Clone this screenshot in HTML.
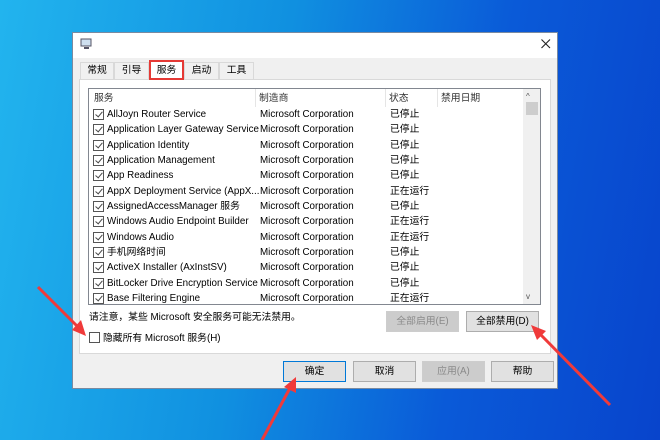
<!DOCTYPE html><html><head><meta charset="utf-8"><style>
*{margin:0;padding:0;box-sizing:border-box}
body{width:660px;height:440px;overflow:hidden;position:relative;font-family:"Liberation Sans","Noto Sans CJK SC",sans-serif;font-size:9.8px;color:#000;
background:linear-gradient(100deg,#22b4ee 0%,#1090e0 40%,#0a5ad8 70%,#0844cc 100%)}
.win{position:absolute;left:72px;top:32px;width:486px;height:357px;background:#f0f0f0;border:1px solid #7a8aa0}
.title{position:absolute;left:0;top:0;width:100%;height:25px;background:#fff}
.abs{position:absolute;white-space:nowrap}
.tab{position:absolute;top:29px;height:17px;border:1px solid #d9d9d9;border-bottom:none;background:#f0f0f0;text-align:center;line-height:16px}
.panel{position:absolute;left:6px;top:46px;width:472px;height:275px;background:#fff;border:1px solid #d9d9d9}
.list{position:absolute;left:15px;top:55px;width:453px;height:217px;background:#fff;border:1px solid #828790;overflow:hidden}
.row{position:absolute;left:0;height:15px;line-height:15px;width:440px}
.cb{position:absolute;left:4px;top:2px;width:11px;height:11px;border:1px solid #555;background:#fff}
.cb:after{content:"";position:absolute;left:3px;top:0px;width:3px;height:6px;border:solid #444;border-width:0 1.2px 1.2px 0;transform:rotate(40deg)}
.btn{position:absolute;height:21px;border:1px solid #adadad;background:#e1e1e1;text-align:center;line-height:19px}
.dis{color:#8a8a8a;border-color:#cdcdcd;background:#ccc}
</style></head><body>
<div class="win">
<div class="title"></div>
<svg class="abs" style="left:7px;top:5px" width="13" height="12"><rect x="1" y="1" width="10" height="7" fill="#cfe0f0" stroke="#556"/><rect x="4" y="9" width="5" height="2" fill="#556"/></svg>
<svg class="abs" style="left:467px;top:5px" width="12" height="12"><path d="M1.5 1.5L10 10M10 1.5L1.5 10" stroke="#222" stroke-width="1.1"/></svg>
<div class="tab" style="left:7px;width:34px">常规</div>
<div class="tab" style="left:41px;width:35px">引导</div>
<div class="tab" style="left:76px;width:35px;top:27px;height:20px;background:#fff;border:2px solid #e53935;line-height:17px;z-index:2">服务</div>
<div class="tab" style="left:111px;width:35px">启动</div>
<div class="tab" style="left:146px;width:35px">工具</div>
<div class="panel"></div>
<div class="list">
<div class="row" style="top:2px;color:#333"><span class="abs" style="left:5px">服务</span><span class="abs" style="left:170px">制造商</span><span class="abs" style="left:300px">状态</span><span class="abs" style="left:352px">禁用日期</span></div>
<div class="abs" style="left:166px;top:0;width:1px;height:18px;background:#e5e5e5"></div>
<div class="abs" style="left:296px;top:0;width:1px;height:18px;background:#e5e5e5"></div>
<div class="abs" style="left:348px;top:0;width:1px;height:18px;background:#e5e5e5"></div>
<div class="abs" style="left:434px;top:0;width:18px;height:216px;background:#f0f0f0"></div>
<div class="abs" style="left:437px;top:3px;font-size:8px;color:#555">^</div>
<div class="abs" style="left:437px;top:13px;width:12px;height:13px;background:#cdcdcd"></div>
<div class="abs" style="left:437px;top:203px;font-size:8px;color:#555">v</div>
<div id="rows"></div>
</div>
<div class="abs" style="left:16px;top:276px">请注意，某些 Microsoft 安全服务可能无法禁用。</div>
<div class="abs" style="left:16px;top:299px;width:11px;height:11px;border:1px solid #555;background:#fff"></div>
<div class="abs" style="left:30px;top:297px">隐藏所有 Microsoft 服务(H)</div>
<div class="btn dis" style="left:313px;top:278px;width:73px">全部启用(E)</div>
<div class="btn" style="left:393px;top:278px;width:73px">全部禁用(D)</div>
<div class="btn" style="left:210px;top:328px;width:63px;border:1px solid #0078d7">确定</div>
<div class="btn" style="left:280px;top:328px;width:63px">取消</div>
<div class="btn dis" style="left:349px;top:328px;width:63px">应用(A)</div>
<div class="btn" style="left:418px;top:328px;width:63px">帮助</div>
</div>
<svg class="abs" style="left:0;top:0" width="660" height="440">
<g stroke="#f03a3a" stroke-width="3" fill="#f03a3a">
<line x1="38" y1="287" x2="78" y2="327"/><polygon points="86,336 72,330 81,320" stroke="none"/>
<line x1="610" y1="405" x2="540" y2="334"/><polygon points="531,325 546,331 537,340" stroke="none"/>
<line x1="262" y1="440" x2="290" y2="388"/><polygon points="296,377 296,393 284,387" stroke="none"/>
</g></svg>
<script>
var d=[["AllJoyn Router Service","已停止"],["Application Layer Gateway Service","已停止"],["Application Identity","已停止"],["Application Management","已停止"],["App Readiness","已停止"],["AppX Deployment Service (AppX...","正在运行"],["AssignedAccessManager 服务","已停止"],["Windows Audio Endpoint Builder","正在运行"],["Windows Audio","正在运行"],["手机网络时间","已停止"],["ActiveX Installer (AxInstSV)","已停止"],["BitLocker Drive Encryption Service","已停止"],["Base Filtering Engine","正在运行"]];
var h="";d.forEach(function(r,i){h+='<div class="row" style="top:'+(18+i*15.33)+'px"><div class="cb"></div><span class="abs" style="left:18px">'+r[0]+'</span><span class="abs" style="left:171px">Microsoft Corporation</span><span class="abs" style="left:301px">'+r[1]+'</span></div>'});
document.getElementById("rows").innerHTML=h;
</script>
</body></html>
